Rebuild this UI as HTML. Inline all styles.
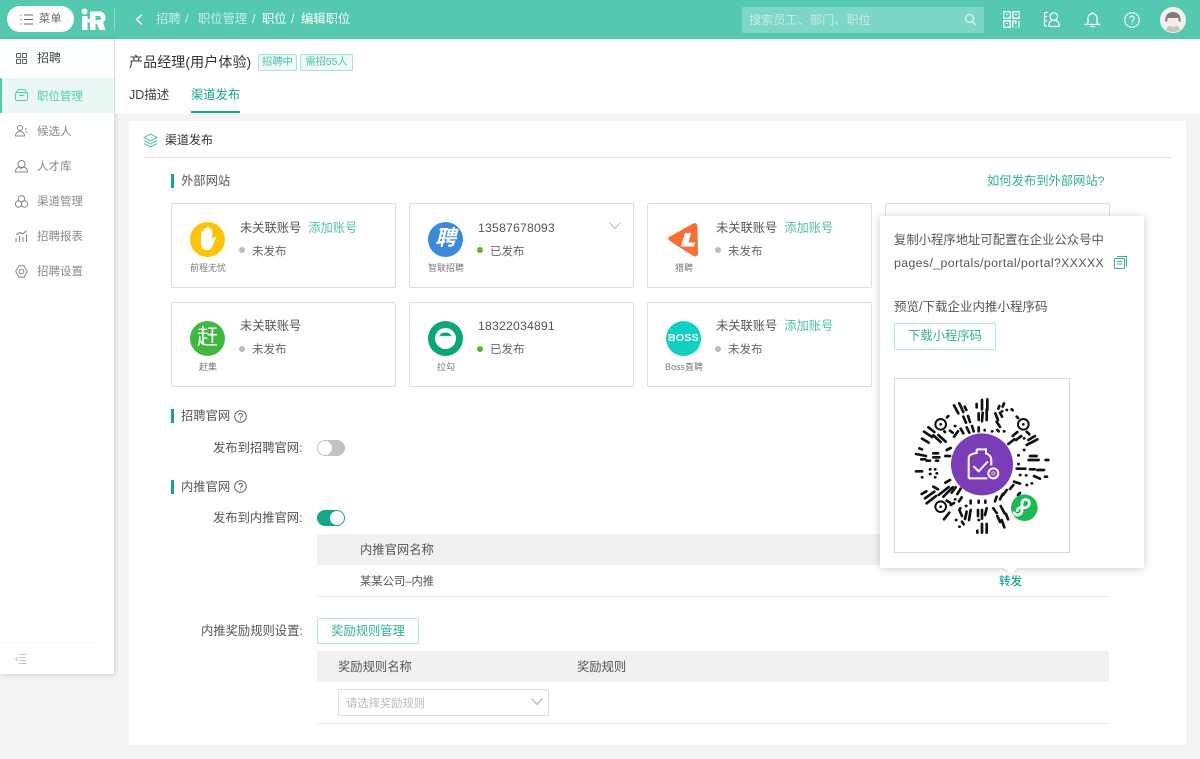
<!DOCTYPE html>
<html lang="zh"><head><meta charset="utf-8"><title>编辑职位</title>
<style>
*{box-sizing:border-box}
html,body{margin:0;padding:0}
body{width:1200px;height:759px;position:relative;overflow:hidden;background:#f3f4f4;font-family:"Liberation Sans","Noto Sans CJK SC",sans-serif;font-size:12.300px;color:#555}
.a{position:absolute;white-space:nowrap}
.g{color:#4fbfa6}
svg{position:absolute;overflow:visible}
.card{position:absolute;width:225px;height:85px;background:#fff;border:1px solid #dcdfdf;border-radius:2px}
.card .t{position:absolute;left:68px;top:15px;font-size:12.250px;color:#555;line-height:18px;white-space:nowrap}
.card .t b{font-weight:400;color:#4fbfa6;margin-left:7px}
.card .t.n{letter-spacing:.18px}
.card .s{position:absolute;left:80px;top:39px;font-size:11.500px;color:#666;line-height:18px;white-space:nowrap}
.card .d{position:absolute;left:67px;top:43px;width:6px;height:6px;border-radius:50%;background:#bbb}
.card .d.on{background:#5cb531}
.card .l{position:absolute;left:0;width:72px;text-align:center;top:58px;font-size:9px;line-height:13px;color:#777;white-space:nowrap}
.r2 .t{top:14px}
.r2 .s{top:38px}
.ic{position:absolute;left:18px;top:18px;width:35px;height:35px;border-radius:50%;color:#fff;text-align:center}
.bar{position:absolute;left:171px;width:3px;height:14px;background:#17a588}
.sec{position:absolute;left:181px;font-size:12.300px;line-height:16px;color:#555}
.nav{position:absolute;left:37px;font-size:11.500px;color:#888;line-height:16px;white-space:nowrap}
.lab{position:absolute;text-align:right;font-size:12.300px;color:#555;line-height:16px;white-space:nowrap}
</style></head><body>

<!-- top bar -->
<div class="a" style="left:0;top:0;width:1200px;height:39px;background:#54c9b0"></div>
<div class="a" style="left:7px;top:6px;width:67px;height:26px;border-radius:13px;background:#fff"></div>
<svg style="left:20px;top:14px" width="14" height="11" fill="none" stroke="#666" stroke-width="1"><path d="M0.500 1h1M0.500 5.500h1M0.500 10h1M4 1h9M4 5.500h9M4 10h9"/></svg>
<div class="a" style="left:39px;top:11px;font-size:11px;line-height:16px;color:#666;letter-spacing:.5px">菜单</div>
<!-- logo -->
<svg style="left:81px;top:8px" width="25" height="23" fill="#fff"><circle cx="3.500" cy="3.500" r="3"/><rect x="1" y="8" width="5.500" height="14"/><rect x="6" y="11" width="4" height="3.500"/><path d="M9 3.500h9.500a6 6 0 0 1 6 6c0 2.500-1 4-2.500 5l2.500 7.500h-6L16 16h-1.500v6H9zM14.500 8v4H18a2 2 0 0 0 0-4z" fill-rule="evenodd"/></svg>
<div class="a" style="left:114px;top:9px;width:1px;height:21px;background:#8fdccb"></div>
<svg style="left:135px;top:14px" width="8" height="11" fill="none" stroke="#fff" stroke-width="1.300"><path d="M7 .5 1.500 5.500 7 10.500"/></svg>
<div class="a" style="left:156px;top:11px;line-height:17px;color:#c8eee5">招聘</div>
<div class="a" style="left:185px;top:11px;line-height:17px;color:#c8eee5">/</div>
<div class="a" style="left:198px;top:11px;line-height:17px;color:#c8eee5">职位管理</div>
<div class="a" style="left:252px;top:11px;line-height:17px;color:#e8f8f4">/</div>
<div class="a" style="left:262px;top:11px;line-height:17px;color:#fff">职位</div>
<div class="a" style="left:291px;top:11px;line-height:17px;color:#fff">/</div>
<div class="a" style="left:301px;top:11px;line-height:17px;color:#fff">编辑职位</div>
<div class="a" style="left:742px;top:7px;width:242px;height:26px;background:#7dd7c4;border-radius:1px"></div>
<div class="a" style="left:749px;top:12px;font-size:12.200px;line-height:17px;color:#c5eee5">搜索员工、部门、职位</div>
<svg style="left:964px;top:13px" width="13" height="13" fill="none" stroke="#e5f7f3" stroke-width="1.200"><circle cx="5.500" cy="5.500" r="4"/><path d="M8.500 8.500 12 12"/></svg>
<svg style="left:1003px;top:11px" width="17" height="17" fill="none" stroke="#fff" stroke-width="1.300"><rect x=".7" y=".7" width="6.500" height="6.500"/><rect x="9.800" y=".7" width="6.500" height="6.500"/><rect x=".7" y="9.800" width="6.500" height="6.500"/><path d="M3 3.500h2M12 3.500h2M3 12.500h2M9.800 16.500v-6.500h3v3M12.500 16.500h1M15.800 10v6.500"/></svg>
<svg style="left:1044px;top:11px" width="16" height="17" fill="none" stroke="#fff" stroke-width="1.200"><path d="M4 1.500H1.500a1 1 0 0 0-1 1V14a1 1 0 0 0 1 1H3M.5 5.500H3M.5 10H3"/><circle cx="9.800" cy="5.500" r="3.800"/><path d="M5 15.500v-2a4 4 0 0 1 3-4h3.500a4 4 0 0 1 3.500 4v2z"/></svg>
<svg style="left:1085px;top:11px" width="15" height="17" fill="none" stroke="#fff" stroke-width="1.200"><path d="M7.500 1v1.500M3 12V7a4.500 4.500 0 0 1 9 0v5l2 1.500H1zM5.500 15.500h4"/></svg>
<svg style="left:1124px;top:12px" width="16" height="16" fill="none" stroke="#fff" stroke-width="1.100"><circle cx="8" cy="8" r="7.300"/><path d="M5.800 6.300a2.200 2.200 0 1 1 3.400 1.800c-.8.500-1.200 1-1.200 2"/><path d="M8 11.300v1.200"/></svg>
<svg style="left:1160px;top:7px" width="26" height="26"><circle cx="13" cy="13" r="13" fill="#f7f0f0"/><path d="M6 23c1.500-4 4-5 7-5s5.500 1 7 5a13 13 0 0 1-14 0z" fill="#c4c4c4"/><path d="M8 11h10v4a5 5 0 0 1-10 0z" fill="#fbe9e7"/><path d="M5.500 15c-1-7 3-10 7.500-10s8.500 3 7.500 10l-2-1v-3H7.500v3z" fill="#7d7d7d"/></svg>

<!-- sidebar -->
<div class="a" style="left:0;top:39px;width:114px;height:635px;background:#fff;box-shadow:1px 1px 5px rgba(0,0,0,.18)"></div>
<svg style="left:16px;top:53px" width="11" height="11" fill="none" stroke="#666"><rect x=".5" y=".5" width="4" height="4"/><rect x="6.500" y=".5" width="4" height="4"/><rect x=".5" y="6.500" width="4" height="4"/><rect x="6.500" y="6.500" width="4" height="4"/></svg>
<div class="a" style="left:37px;top:50px;font-size:12px;line-height:16px;color:#444">招聘</div>
<div class="a" style="left:0;top:78px;width:114px;height:35px;background:#eaf8f5"></div>
<div class="a" style="left:0;top:78px;width:2px;height:35px;background:#54c9b0"></div>
<svg style="left:15px;top:89px" width="13" height="12" fill="none" stroke="#54c9b0"><path d="M1.500 3.500 3 .5h7l1.500 3"/><rect x=".5" y="3.500" width="12" height="8" rx="1.500"/><path d="M4 5.500c1 1.500 4 1.500 5 0"/></svg>
<div class="nav" style="top:89px;color:#54c9b0">职位管理</div>
<svg style="left:15px;top:125px" width="13" height="12" fill="none" stroke="#888"><circle cx="5" cy="3" r="2.500"/><path d="M.5 11c0-3 2-4.500 4.500-4.500S9.500 8 9.500 11zM10 4h2M10.500 7h2"/></svg>
<div class="nav" style="top:124px">候选人</div>
<svg style="left:15px;top:160px" width="13" height="13" fill="none" stroke="#888"><circle cx="6.500" cy="4" r="3.500"/><path d="M.5 12c0-3 1-4 3.500-5l2 1.500L9 7c2.500 1 3.500 2 3.500 5z"/></svg>
<div class="nav" style="top:159px">人才库</div>
<svg style="left:15px;top:195px" width="13" height="13" fill="none" stroke="#888"><circle cx="6.500" cy="3.800" r="3.200"/><circle cx="3.500" cy="9" r="3.200"/><circle cx="9.500" cy="9" r="3.200"/></svg>
<div class="nav" style="top:194px">渠道管理</div>
<svg style="left:15px;top:230px" width="13" height="13" fill="none" stroke="#888"><path d="M1 12V8M4.500 12V6M8 12V7M11.500 12V4M1 5l3.500-2.500L8 4l3.500-3.500"/></svg>
<div class="nav" style="top:229px">招聘报表</div>
<svg style="left:15px;top:265px" width="13" height="13" fill="none" stroke="#888"><path d="M4 .7h5l3.300 5.800L9 12.300H4L.7 6.500z"/><circle cx="6.500" cy="6.500" r="2.300"/></svg>
<div class="nav" style="top:264px">招聘设置</div>
<div class="a" style="left:0;top:642px;width:93px;height:1px;background:#f6f6f6"></div>
<svg style="left:15px;top:654px" width="11" height="10" fill="none" stroke="#c4c4c4"><path d="M4 .5h7M5 3.500h6M5 6.500h6M4 9.500h7M3 3 .5 5 3 7"/></svg>

<!-- header white -->
<div class="a" style="left:115px;top:39px;width:1085px;height:75px;background:#fff"></div>
<div class="a" style="left:129px;top:53px;font-size:14px;letter-spacing:.1px;line-height:18px;color:#333">产品经理(用户体验)</div>
<div class="a" style="left:258px;top:54px;width:39px;height:17px;border:1px solid #a9e2d5;background:#eefaf7;border-radius:2px;font-size:10.300px;line-height:15px;text-align:center;color:#4fbfa6">招聘中</div>
<div class="a" style="left:300px;top:54px;width:53px;height:17px;border:1px solid #a9e2d5;background:#eefaf7;border-radius:2px;font-size:10.300px;line-height:15px;text-align:center;color:#4fbfa6">需招55人</div>
<div class="a" style="left:129px;top:86px;font-size:12.500px;line-height:18px;color:#444">JD描述</div>
<div class="a" style="left:191px;top:86px;font-size:12.300px;line-height:18px;color:#17a588">渠道发布</div>
<div class="a" style="left:191px;top:111px;width:49px;height:2px;background:#17a588"></div>

<!-- main panel -->
<div class="a" style="left:129px;top:121px;width:1057px;height:624px;background:#fff"></div>
<svg style="left:143px;top:133px" width="15" height="15" fill="none" stroke="#54c9b0"><path d="M7.500 1 14 4.500 7.500 8 1 4.500z"/><path d="M1 7.500 7.500 11 14 7.500M1 10.500 7.500 14 14 10.500"/></svg>
<div class="a" style="left:165px;top:132px;font-size:12px;line-height:17px;color:#333">渠道发布</div>
<div class="a" style="left:143px;top:157px;width:1029px;height:1px;background:#e3e3e3"></div>

<div class="bar" style="top:174px"></div>
<div class="sec" style="top:173px">外部网站</div>
<div class="a g" style="left:987px;top:173px;line-height:17px;color:#33b295">如何发布到外部网站?</div>

<!-- cards -->
<div class="card" style="left:171px;top:203px">
  <div class="ic" style="background:#fdc30a"><svg style="left:8px;top:4px" width="19" height="25" fill="#fff"><path d="M3 12V6.500a1.400 1.400 0 0 1 2.800 0V3.500a1.400 1.400 0 0 1 2.800 0V2a1.400 1.400 0 0 1 2.800 0v2a1.400 1.400 0 0 1 2.800 0v9.500l1.800-2.300c1.200-1 2.500 0 1.800 1.200L14 21c-1 2-2.500 3-5 3-3.500 0-6-2-6-6z"/></svg></div>
  <div class="t">未关联账号<b>添加账号</b></div><i class="d"></i><div class="s">未发布</div><div class="l">前程无忧</div>
</div>
<div class="card" style="left:409px;top:203px">
  <div class="ic" style="background:#3a8ad9;font-size:21px;line-height:34px;font-style:italic;font-weight:700">聘</div>
  <div class="t n">13587678093</div><i class="d on"></i><div class="s">已发布</div><div class="l">智联招聘</div>
  <svg style="left:199px;top:18px" width="12" height="8" fill="none" stroke="#bbb"><path d="M.5 .5 6 6.500 11.500 .5"/></svg>
</div>
<div class="card" style="left:647px;top:203px">
  <svg style="left:20px;top:18px" width="31" height="35"><path d="M1 15 25 1.500Q29 0 29.500 4L30 31Q30 35 26 34.500L2 19Q-1 17 1 15z" fill="#f96f38"/><path d="M17 11h6l-2.500 9.500h6.500l-1 4H13z" fill="#fff"/></svg>
  <div class="t">未关联账号<b>添加账号</b></div><i class="d"></i><div class="s">未发布</div><div class="l">猎聘</div>
</div>
<div class="card" style="left:885px;top:203px"></div>

<div class="card r2" style="left:171px;top:302px">
  <div class="ic" style="background:#3fb83f;font-size:21px;line-height:34px">赶</div>
  <div class="t">未关联账号</div><i class="d"></i><div class="s">未发布</div><div class="l">赶集</div>
</div>
<div class="card r2" style="left:409px;top:302px">
  <div class="ic" style="background:#0aa777"><svg style="left:6px;top:7px" width="23" height="21"><circle cx="11.500" cy="10.500" r="10.500" fill="#fff"/><path d="M5 9c1-3 3-4.500 6.500-4.500S17 6 18 9c-2-1.500-3-1.500-4-.5-1-1-2-1-2.500 0-1-1-2-1-3 0-1-1-2-1-3.500.5z" fill="#0aa777"/></svg></div>
  <div class="t n">18322034891</div><i class="d on"></i><div class="s">已发布</div><div class="l">拉勾</div>
</div>
<div class="card r2" style="left:647px;top:302px">
  <div class="ic" style="background:#10d0c0;font-size:10.500px;font-weight:700;letter-spacing:.3px;line-height:35px">BOSS</div>
  <div class="t">未关联账号<b>添加账号</b></div><i class="d"></i><div class="s">未发布</div><div class="l">Boss直聘</div>
</div>
<div class="card" style="left:885px;top:302px"></div>

<!-- site sections -->
<div class="bar" style="top:409px"></div>
<div class="sec" style="top:408px">招聘官网</div>
<svg style="left:234px;top:410px" width="13" height="13" fill="none" stroke="#666"><circle cx="6.500" cy="6.500" r="5.800"/><path d="M4.800 5.200a1.800 1.800 0 1 1 2.700 1.500c-.7.400-1 .8-1 1.500M6.500 9.200v1"/></svg>
<div class="lab" style="left:213px;top:440px">发布到招聘官网:</div>
<div class="a" style="left:317px;top:440px;width:28px;height:16px;border-radius:8px;background:#c2c2c2"></div>
<div class="a" style="left:318px;top:441px;width:14px;height:14px;border-radius:50%;background:#fff"></div>

<div class="bar" style="top:480px"></div>
<div class="sec" style="top:479px">内推官网</div>
<svg style="left:234px;top:480px" width="13" height="13" fill="none" stroke="#666"><circle cx="6.500" cy="6.500" r="5.800"/><path d="M4.800 5.200a1.800 1.800 0 1 1 2.700 1.500c-.7.400-1 .8-1 1.500M6.500 9.200v1"/></svg>
<div class="lab" style="left:213px;top:510px">发布到内推官网:</div>
<div class="a" style="left:317px;top:510px;width:28px;height:16px;border-radius:8px;background:#17a588"></div>
<div class="a" style="left:330px;top:511px;width:14px;height:14px;border-radius:50%;background:#fff"></div>

<div class="a" style="left:317px;top:534px;width:792px;height:31px;background:#f1f1f1"></div>
<div class="a" style="left:360px;top:542px;line-height:16px;color:#555">内推官网名称</div>
<div class="a" style="left:360px;top:574px;font-size:11.300px;line-height:16px;color:#555">某某公司–内推</div>
<div class="a" style="left:999px;top:574px;font-size:11.500px;font-weight:500;line-height:16px;color:#17a588">转发</div>
<div class="a" style="left:317px;top:596px;width:792px;height:1px;background:#e6e6e6"></div>

<div class="lab" style="left:201px;top:623px">内推奖励规则设置:</div>
<div class="a" style="left:317px;top:618px;width:102px;height:26px;border:1px solid #b5e5da;border-radius:2px;text-align:center;line-height:24px;color:#33b295">奖励规则管理</div>
<div class="a" style="left:317px;top:651px;width:792px;height:31px;background:#f1f1f1"></div>
<div class="a" style="left:338px;top:659px;line-height:16px;color:#555">奖励规则名称</div>
<div class="a" style="left:577px;top:659px;line-height:16px;color:#555">奖励规则</div>
<div class="a" style="left:338px;top:689px;width:211px;height:27px;border:1px solid #dedede"></div>
<div class="a" style="left:346px;top:696px;font-size:11.300px;line-height:16px;color:#bbb">请选择奖励规则</div>
<svg style="left:531px;top:698px" width="12" height="8" fill="none" stroke="#aaa"><path d="M.5 .5 6 6.500 11.500 .5"/></svg>
<div class="a" style="left:317px;top:723px;width:792px;height:1px;background:#e6e6e6"></div>

<!-- popover -->
<div class="a" style="left:1007px;top:563px;width:8px;height:8px;background:#fff;transform:rotate(45deg);box-shadow:2px 2px 3px rgba(0,0,0,.08)"></div>
<div class="a" style="left:880px;top:216px;width:264px;height:352px;background:#fff;box-shadow:0 1px 8px rgba(0,0,0,.2)"></div>
<div class="a" style="left:1006px;top:562px;width:10px;height:10px;background:#fff;transform:rotate(45deg)"></div>
<div class="a" style="left:894px;top:232px;font-size:12.350px;line-height:16px;color:#555">复制小程序地址可配置在企业公众号中</div>
<div class="a" style="left:894px;top:255px;font-size:12.300px;letter-spacing:.39px;line-height:16px;color:#555">pages/_portals/portal/portal?XXXXX</div>
<svg style="left:1114px;top:256px" width="13" height="13" fill="none" stroke="#33b295"><path d="M3 .5h9.500v10"/><rect x=".5" y="2.500" width="10" height="10" rx="1"/><path d="M3 5.500h5M3 8h5"/></svg>
<div class="a" style="left:894px;top:299px;font-size:12.500px;line-height:16px;color:#555">预览/下载企业内推小程序码</div>
<div class="a" style="left:894px;top:323px;width:102px;height:27px;border:1px solid #b5e5da;border-radius:2px;text-align:center;line-height:25px;color:#33b295">下载小程序码</div>
<div class="a" style="left:894px;top:378px;width:176px;height:175px;border:1px solid #d8d8d8;background:#fff"></div>

<!-- QR (crop coords 3x, origin 880,370) -->
<svg style="left:880px;top:370px" width="200" height="200" viewBox="0 0 600 600">
<g fill="none" stroke="#111" stroke-width="8" stroke-linecap="round">
<circle cx="182" cy="163" r="16" stroke-width="6"/><circle cx="430" cy="163" r="16" stroke-width="6"/><circle cx="182" cy="410" r="16" stroke-width="6"/>
<path d="M182 163h.1M430 163h.1M182 410h.1"/>
<path d="M222 106l13 24M238 100l12 26M254 110l5 10M290 102v10M306 90v28M322 88v32M372 100l-4 10M358 108l-3 8M380 120h1M366 124h1M205 138l-4 4M250 140l8 18M264 138l6 18M296 130v20M308 128l-2 26M320 118v32M346 130l8 20M360 128l6 12M350 155l10 16M410 140l4 4M395 118l3 3"/>
<path d="M145 172l18 14M132 185l24 16M126 206l20 12M160 196l22 20M175 195l22 20M195 186l-2-2M225 168h1M210 182l8 6M242 176l8 14M260 172l8 16M276 168l5 16M296 172v12M314 180v1M336 184h1M352 180l4 4M372 184h1M398 198l14-12M408 210l16-12M385 222l18-14M440 185l8 8M432 205h1M445 210l20-12M450 220l22-12M440 225l8-5M222 200l12-16"/>
<path d="M118 235l8 3M108 252l30 6M124 268h12M140 272h10M160 250h14M160 262h18M168 272h6M200 240l12-6M196 258h14M415 256h1M432 240h1M450 258h20M446 270h30M497 270h8M415 282h1"/>
<path d="M108 304h18M150 298h1M165 298h1M150 312h1M170 310h1M165 322h1M126 322h1M196 338l14-8M410 296h26M450 298h14M472 300h20M420 315h1M438 316h1M462 318l18 8M495 320h6M402 335l18 6M440 345h1M455 340h1"/>
<path d="M125 372l14-8M135 385l28-20M140 400l28-22M160 350l14 8M176 375l30-24M190 380l28-28M215 368l12-16M232 372l10-16M200 392l10 6M212 405l10-6M192 448l16-20M260 360h1M272 392v8M296 392v6M316 392v6M350 380l-5 14M368 372l-8 16M380 360l-10 14M400 345l-10 12M414 375l6-6M245 382l-8 12M225 388h1"/>
<path d="M238 420l8 18M228 450h1M246 455l5 8M238 470h1M260 425l-5 22M272 420l-5 30M294 420v18M306 420v26M320 415l-5 20M296 450h1M340 415l10 14M362 408l12 22M352 438l8 18M378 432l6 16M365 450l8 22M292 482v6M306 462v26M320 462v26M240 415h1M258 408h1"/>
</g>
<circle cx="306" cy="283" r="93" fill="#7b3cb8"/>
<g fill="none" stroke="#fff" stroke-width="6"><path d="M290 238h28v12c10 4 16 10 16 20v16M266 325v-62c0-6 8-12 24-14v-11M266 325h56"/><path d="M282 290l14 14 26-28" stroke-linecap="round"/><circle cx="340" cy="310" r="15"/></g>
<circle cx="340" cy="310" r="8" fill="#b184d8"/>
<circle cx="433" cy="413" r="40" fill="#1db954"/>
<path d="M412 425c-2-10 8-14 14-12l8 0c8 0 14-6 14-14 0-8-8-12-14-10-6 2-8 6-8 12v20c0 8-6 14-14 14-6 0-10-4-10-10" fill="none" stroke="#fff" stroke-width="8"/>
</svg>
</body></html>
